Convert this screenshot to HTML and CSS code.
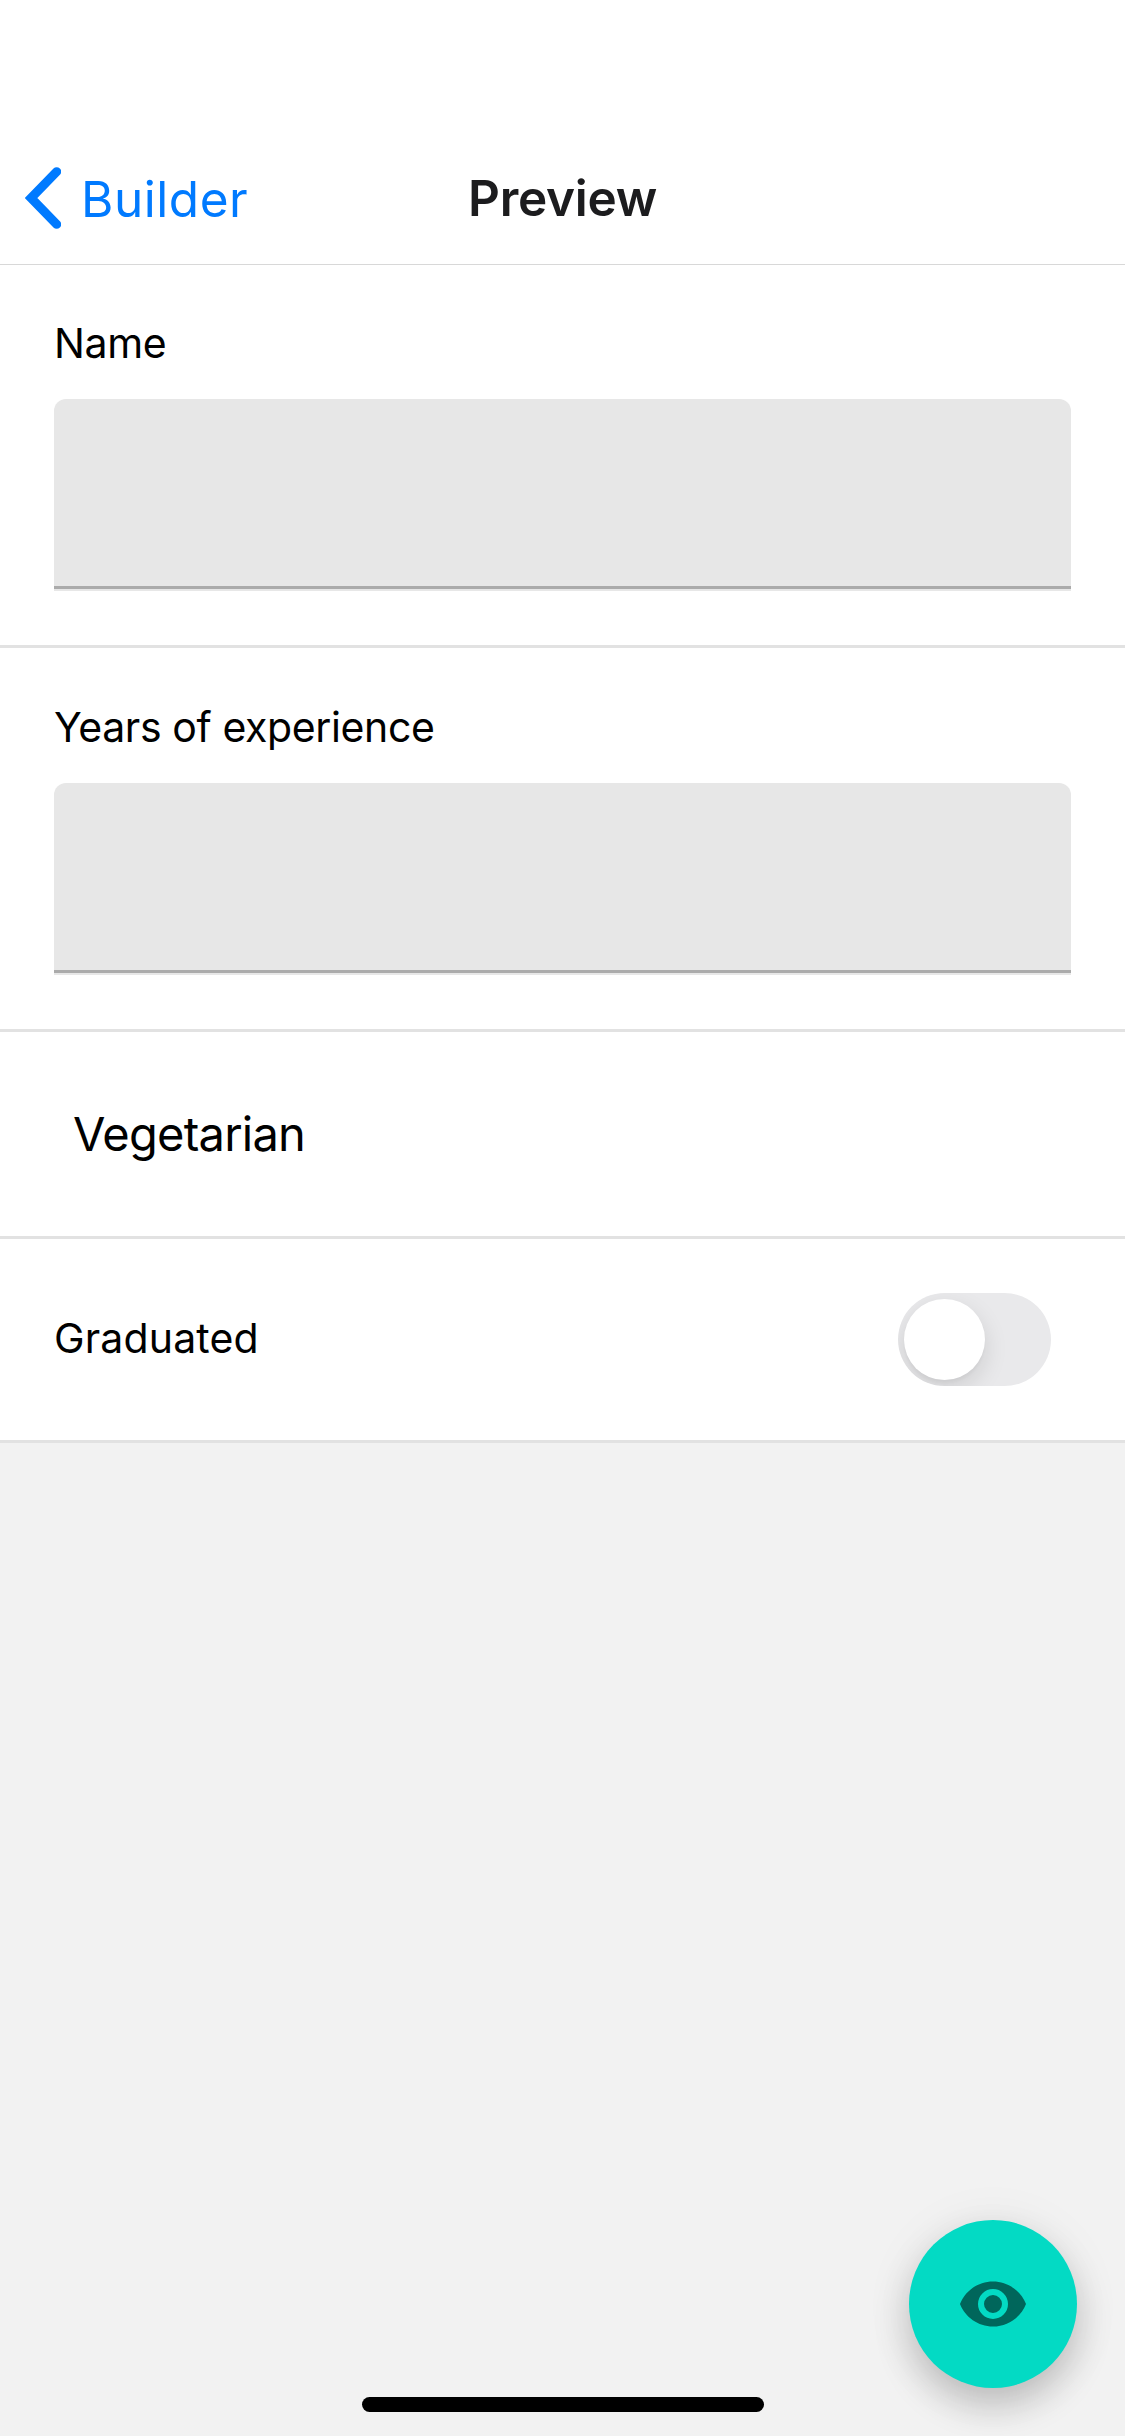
FILE: index.html
```html
<!DOCTYPE html>
<html lang="en">
<head>
<meta charset="utf-8">
<title>Preview</title>
<link rel="stylesheet" href="styles.css">
</head>
<body>
<div class="screen">
  <header class="navbar">
    <a class="back">
      <svg class="chevron" viewBox="0 0 36 62" width="36" height="62"><path d="M31.7 4.7L6 31L31.7 57.3" fill="none" stroke="#007aff" stroke-width="9" stroke-linecap="round"/></svg>
      <span class="back-label">Builder</span>
    </a>
    <h1 class="title">Preview</h1>
    <span></span>
  </header>
  <main class="form">
    <section class="row row-field">
      <label class="label label-name">Name</label>
      <div class="input"></div>
    </section>
    <section class="row row-field">
      <label class="label label-years">Years of experience</label>
      <div class="input"></div>
    </section>
    <section class="row row-check"><span class="check-label">Vegetarian</span></section>
    <section class="row row-switch">
      <span class="label label-graduated">Graduated</span>
      <div class="switch"><div class="knob"></div></div>
    </section>
  </main>
  <div class="fab">
    <svg viewBox="0 0 24 24" width="72" height="72"><path fill="#00665b" d="M12 9a3 3 0 0 0-3 3 3 3 0 0 0 3 3 3 3 0 0 0 3-3 3 3 0 0 0-3-3m0 8a5 5 0 0 1-5-5 5 5 0 0 1 5-5 5 5 0 0 1 5 5 5 5 0 0 1-5 5m0-12.5C7 4.500 2.730 7.610 1 12c1.730 4.390 6 7.500 11 7.500s9.270-3.110 11-7.500c-1.730-4.390-6-7.500-11-7.500z"/></svg>
  </div>
  <div class="home-indicator"></div>
</div>
</body>
</html>
```
FILE: styles.css
```css
* { box-sizing: border-box; }
body {
  margin: 0;
  font-family: Inter, "Liberation Sans", sans-serif;
  color: #000;
}
.screen {
  position: relative;
  width: 1125px;
  height: 2436px;
  overflow: hidden;
  background: #f2f2f2;
}
.navbar {
  position: relative;
  display: grid;
  grid-template-columns: 1fr auto 1fr;
  align-items: center;
  height: 264px;
  padding-top: 132px;
  background: #fff;
  box-shadow: 0 1px 0 #d8d8d8;
}
.back {
  display: flex;
  align-items: center;
  gap: 20px;
  padding-left: 25px;
  color: #007aff;
}
.back-label {
  padding-top: 2px;
  font-size: 49.5px;
  line-height: 60px;
  letter-spacing: .55px;
}
.title {
  margin: 0;
  font-size: 49.5px;
  line-height: 60px;
  font-weight: 600;
  letter-spacing: -.3px;
  color: #1c1c1e;
}
.row {
  background: #fff;
  border-bottom: 3px solid #e2e2e2;
  padding: 0 54px;
}
.row-field {
  display: flex;
  flex-direction: column;
  gap: 26px;
  height: 384px;
  padding-top: 49px;
}
.label {
  font-size: 41px;
  line-height: 60px;
  letter-spacing: -.38px;
}
.input {
  height: 192px;
  border-radius: 12px 12px 0 0;
  background: linear-gradient(#ababab, #ababab) 0 187px / 100% 3px no-repeat #e7e7e7;
}
.row-check {
  display: flex;
  align-items: center;
  height: 207px;
  padding-left: 73px;
}
.check-label {
  font-size: 47px;
  line-height: 72px;
  letter-spacing: -.75px;
}
.row-switch {
  display: flex;
  align-items: center;
  justify-content: space-between;
  height: 204px;
  padding-right: 74px;
}
.label-graduated {
  padding-bottom: 3px;
  letter-spacing: .15px;
}
.switch {
  width: 153px;
  height: 93px;
  padding: 6px;
  border-radius: 47px;
  overflow: hidden;
  background: #e9e9eb;
}
.knob {
  width: 81px;
  height: 81px;
  border-radius: 50%;
  background: #fff;
  box-shadow: 0 9px 24px rgba(0, 0, 0, .12), 0 3px 3px rgba(0, 0, 0, .03);
}
.fab {
  position: absolute;
  left: 909px;
  top: 2220px;
  display: flex;
  align-items: center;
  justify-content: center;
  width: 168px;
  height: 168px;
  border-radius: 50%;
  background: #03dac4;
  box-shadow: 0 18px 36px rgba(0, 0, 0, .2), 0 3px 54px rgba(0, 0, 0, .06);
}
.home-indicator {
  position: absolute;
  left: 362px;
  top: 2397px;
  width: 402px;
  height: 15px;
  border-radius: 8px;
  background: #000;
}
```
